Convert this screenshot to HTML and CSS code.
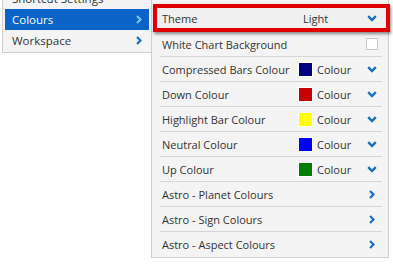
FILE: index.html
```html
<!DOCTYPE html>
<html>
<head>
<meta charset="utf-8">
<link rel="stylesheet" href="styles.css">
</head>
<body>
<div class="wrap">
  <div class="menu">
    <div class="mitem">Shortcut Settings</div>
    <div class="mitem active"><span>Colours</span>
      <svg class="rchev" width="6" height="9" viewBox="0 0 6 9"><polyline points="1,1 4.5,4.5 1,8" fill="none" stroke="currentColor" stroke-width="2.2"/></svg></div>
    <div class="mitem"><span>Workspace</span>
      <svg class="rchev" width="6" height="9" viewBox="0 0 6 9"><polyline points="1,1 4.5,4.5 1,8" fill="none" stroke="currentColor" stroke-width="2.2"/></svg></div>
  </div>
  <div class="panel">
    <div class="row theme">
      <span class="label">Theme</span>
      <span class="val"><span class="vtext">Light</span></span>
      <span class="chev"><svg width="10" height="7" viewBox="0 0 10 7"><polyline points="1.2,1.2 5,5 8.8,1.2" fill="none" stroke="currentColor" stroke-width="2.4"/></svg></span>
    </div>
    <div class="row">
      <span class="label">White Chart Background</span>
      <span class="chev"><span class="check"></span></span>
    </div>
    <div class="row">
      <span class="label">Compressed Bars Colour</span>
      <span class="val"><span class="sw" style="background:#000080"></span>Colour</span>
      <span class="chev"><svg width="10" height="7" viewBox="0 0 10 7"><polyline points="1.2,1.2 5,5 8.8,1.2" fill="none" stroke="currentColor" stroke-width="2.4"/></svg></span>
    </div>
    <div class="row">
      <span class="label">Down Colour</span>
      <span class="val"><span class="sw" style="background:#c80000"></span>Colour</span>
      <span class="chev"><svg width="10" height="7" viewBox="0 0 10 7"><polyline points="1.2,1.2 5,5 8.8,1.2" fill="none" stroke="currentColor" stroke-width="2.4"/></svg></span>
    </div>
    <div class="row">
      <span class="label">Highlight Bar Colour</span>
      <span class="val"><span class="sw" style="background:#ffff00"></span>Colour</span>
      <span class="chev"><svg width="10" height="7" viewBox="0 0 10 7"><polyline points="1.2,1.2 5,5 8.8,1.2" fill="none" stroke="currentColor" stroke-width="2.4"/></svg></span>
    </div>
    <div class="row">
      <span class="label">Neutral Colour</span>
      <span class="val"><span class="sw" style="background:#0000ff"></span>Colour</span>
      <span class="chev"><svg width="10" height="7" viewBox="0 0 10 7"><polyline points="1.2,1.2 5,5 8.8,1.2" fill="none" stroke="currentColor" stroke-width="2.4"/></svg></span>
    </div>
    <div class="row">
      <span class="label">Up Colour</span>
      <span class="val"><span class="sw" style="background:#008000"></span>Colour</span>
      <span class="chev"><svg width="10" height="7" viewBox="0 0 10 7"><polyline points="1.2,1.2 5,5 8.8,1.2" fill="none" stroke="currentColor" stroke-width="2.4"/></svg></span>
    </div>
    <div class="row">
      <span class="label">Astro - Planet Colours</span>
      <span class="chev"><svg width="6" height="9" viewBox="0 0 6 9"><polyline points="1,1 4.5,4.5 1,8" fill="none" stroke="currentColor" stroke-width="2.2"/></svg></span>
    </div>
    <div class="row">
      <span class="label">Astro - Sign Colours</span>
      <span class="chev"><svg width="6" height="9" viewBox="0 0 6 9"><polyline points="1,1 4.5,4.5 1,8" fill="none" stroke="currentColor" stroke-width="2.2"/></svg></span>
    </div>
    <div class="row last">
      <span class="label">Astro - Aspect Colours</span>
      <span class="chev"><svg width="6" height="9" viewBox="0 0 6 9"><polyline points="1,1 4.5,4.5 1,8" fill="none" stroke="currentColor" stroke-width="2.2"/></svg></span>
    </div>
  </div>
</div>
</body>
</html>
```
FILE: styles.css
```css
html, body {
  margin: 0;
  padding: 0;
  background: #fff;
}
body {
  font-family: "Open Sans", "Liberation Sans", sans-serif;
  font-size: 11px;
  color: #333;
  overflow: hidden;
}
* {
  box-sizing: border-box;
}
.wrap {
  display: flex;
  align-items: flex-start;
  margin-top: -13px;
  padding-left: 2px;
}
.menu {
  width: 150px;
  flex-shrink: 0;
  background: #f4f4f4;
  border: 1px solid #cfcfcf;
  padding: 0 2px 1px 2px;
}
.mitem {
  height: 21px;
  display: flex;
  align-items: center;
  justify-content: space-between;
  padding: 0 7px 0 7px;
  font-size: 11.5px;
  color: #333;
}
.mitem .rchev {
  color: #1a6fbe;
}
.mitem.active {
  background: #0a64c8;
  color: #fff;
}
.mitem.active .rchev {
  color: #7cc0f2;
}
.panel {
  width: 238px;
  flex-shrink: 0;
  margin-top: 12px;
  margin-left: -1px;
  background: #f4f4f4;
  border: 1px solid #cfcfcf;
  padding: 0 6px 1px 8px;
}
.row {
  height: 25px;
  display: flex;
  align-items: center;
  border-bottom: 1px solid #d6d6d6;
}
.row.last {
  height: 24px;
  border-bottom: none;
}
.row.theme {
  height: 28px;
  margin: 4px -8px 0 -7px;
  border: 4px solid #e00000;
  padding: 0 4px 0 3px;
  background: #f0f0f0;
  box-shadow: 1px 2px 3px rgba(0, 0, 0, 0.45);
}
.label {
  flex: 1;
  padding-left: 2px;
}
.val {
  width: 64px;
  display: flex;
  align-items: center;
}
.vtext {
  padding-left: 5px;
}
.sw {
  width: 15px;
  height: 15px;
  border: 1px solid #fff;
  margin-right: 4px;
}
.chev {
  width: 20px;
  display: flex;
  justify-content: center;
  align-items: center;
  color: #1a6fbe;
}
.check {
  width: 12px;
  height: 12px;
  background: #fff;
  border: 1px solid #c8c8c8;
}
```
